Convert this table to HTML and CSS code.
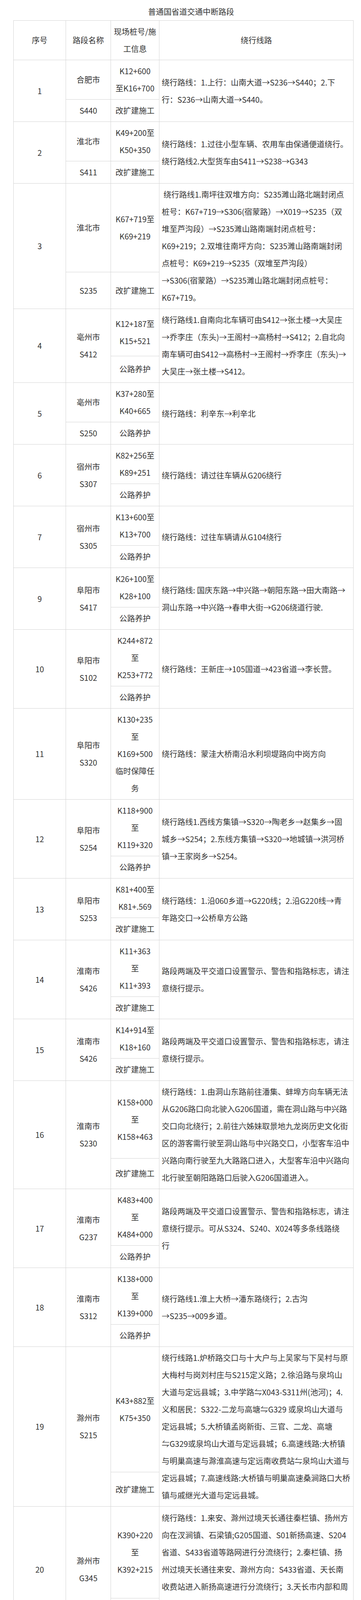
FILE: index.html
```html
<!DOCTYPE html>
<html lang="zh-CN">
<head>
<meta charset="utf-8">
<title>普通国省道交通中断路段</title>
<link rel="stylesheet" href="styles.css">
</head>
<body>
<div class="page">
<p class="title">普通国省道交通中断路段</p>
<table class="roads">
<colgroup><col class="c-num"><col class="c-name"><col class="c-pos"><col class="c-route"></colgroup>
<tbody>
<tr><td>序号</td><td>路段名称</td><td>现场桩号/施<br>工信息</td><td>绕行线路</td></tr>

<tr><td rowspan="2">1</td><td>合肥市</td><td>K12+600<br>至K16+700</td><td rowspan="2" class="route">绕行路线：1.上行：山南大道→S236→S440；2.下<br>行：S236→山南大道→S440。</td></tr>
<tr><td>S440</td><td>改扩建施工</td></tr>

<tr><td rowspan="2">2</td><td>淮北市</td><td>K49+200至<br>K50+350</td><td rowspan="2" class="route">绕行路线：1.过往小型车辆、农用车由保通便道绕行。<br>绕行路线2.大型货车由S411→S238→G343</td></tr>
<tr><td>S411</td><td>改扩建施工</td></tr>

<tr class="r3a"><td rowspan="2">3</td><td>淮北市</td><td>K67+719至<br>K69+219</td><td rowspan="2" class="route">&nbsp;绕行路线1.南坪往双堆方向：S235濉山路北端封闭点<br>桩号：K67+719→S306(宿蒙路）→X019→S235（双<br>堆至芦沟段）→S235濉山路南端封闭点桩号：<br>K69+219；2.双堆往南坪方向：S235濉山路南端封闭<br>点桩号：K69+219→S235（双堆至芦沟段）<br>→S306(宿蒙路）→S235濉山路北端封闭点桩号：<br>K67+719。</td></tr>
<tr class="r3b"><td>S235</td><td>改扩建施工</td></tr>

<tr><td rowspan="2">4</td><td rowspan="2">亳州市<br>S412</td><td>K12+187至<br>K15+521</td><td rowspan="2" class="route">绕行路线1.自南向北车辆可由S412→张土楼→大吴庄<br>→乔李庄（东头)→王阁村→高杨村→S412；2.自北向<br>南车辆可由S412→高杨村→王阁村→乔李庄（东头)→<br>大吴庄→张土楼→S412。</td></tr>
<tr><td>公路养护</td></tr>

<tr><td rowspan="2">5</td><td>亳州市</td><td>K37+280至<br>K40+665</td><td rowspan="2" class="route">绕行路线：利辛东→利辛北</td></tr>
<tr><td>S250</td><td>公路养护</td></tr>

<tr><td rowspan="2">6</td><td rowspan="2">宿州市<br>S307</td><td>K82+256至<br>K89+251</td><td rowspan="2" class="route">绕行路线：请过往车辆从G206绕行</td></tr>
<tr><td>公路养护</td></tr>

<tr><td rowspan="2">7</td><td rowspan="2">宿州市<br>S305</td><td>K13+600至<br>K13+700</td><td rowspan="2" class="route">绕行路线：过往车辆请从G104绕行</td></tr>
<tr><td>公路养护</td></tr>

<tr><td rowspan="2">9</td><td rowspan="2">阜阳市<br>S417</td><td>K26+100至<br>K28+100</td><td rowspan="2" class="route">绕行路线: 国庆东路→中兴路→朝阳东路→田大南路→<br>洞山东路→中兴路→春申大街→G206绕道行驶.</td></tr>
<tr><td>公路养护</td></tr>

<tr><td rowspan="2">10</td><td rowspan="2">阜阳市<br>S102</td><td>K244+872<br>至<br>K253+772</td><td rowspan="2" class="route">绕行路线：王新庄→105国道→423省道→李长营。</td></tr>
<tr><td>公路养护</td></tr>

<tr><td>11</td><td>阜阳市<br>S320</td><td>K130+235<br>至<br>K169+500<br>临时保障任<br>务</td><td class="route">绕行路线：蒙洼大桥南沿水利坝堤路向中岗方向</td></tr>

<tr><td rowspan="2">12</td><td rowspan="2">阜阳市<br>S254</td><td>K118+900<br>至<br>K119+320</td><td rowspan="2" class="route">绕行路线1.西线方集镇→S320→陶老乡→赵集乡→固<br>城乡→S254；2.东线方集镇→S320→地城镇→洪河桥<br>镇→王家岗乡→S254。</td></tr>
<tr><td>公路养护</td></tr>

<tr><td rowspan="2">13</td><td rowspan="2">阜阳市<br>S253</td><td>K81+400至<br>K81+.569</td><td rowspan="2" class="route">绕行路线：1.沿060乡道→G220线；2.沿G220线→青<br>年路交口→公桥阜方公路</td></tr>
<tr><td>改扩建施工</td></tr>

<tr><td rowspan="2">14</td><td rowspan="2">淮南市<br>S426</td><td>K11+363<br>至<br>K11+393</td><td rowspan="2" class="route">路段两端及平交道口设置警示、警告和指路标志，请注<br>意绕行提示。</td></tr>
<tr><td>改扩建施工</td></tr>

<tr><td rowspan="2">15</td><td rowspan="2">淮南市<br>S426</td><td>K14+914至<br>K18+160</td><td rowspan="2" class="route">路段两端及平交道口设置警示、警告和指路标志，请注<br>意绕行提示。</td></tr>
<tr><td>改扩建施工</td></tr>

<tr><td rowspan="2">16</td><td rowspan="2">淮南市<br>S230</td><td>K158+000<br>至<br>K158+463</td><td rowspan="2" class="route">绕行路线：1.由洞山东路前往潘集、蚌埠方向车辆无法<br>从G206路口向北驶入G206国道，需在洞山路与中兴路<br>交口向北绕行；2.前往六姊妹取景地九龙岗历史文化街<br>区的游客需行驶至洞山路与中兴路交口，小型客车沿中<br>兴路向南行驶至九大路路口进入，大型客车沿中兴路向<br>北行驶至朝阳路路口后驶入G206国道进入。</td></tr>
<tr><td>改扩建施工</td></tr>

<tr><td rowspan="2">17</td><td rowspan="2">淮南市<br>G237</td><td>K483+400<br>至<br>K484+000</td><td rowspan="2" class="route">路段两端及平交道口设置警示、警告和指路标志，请注<br>意绕行提示。可从S324、S240、X024等多条线路绕<br>行</td></tr>
<tr><td>公路养护</td></tr>

<tr><td rowspan="2">18</td><td rowspan="2">淮南市<br>S312</td><td>K138+000<br>至<br>K139+000</td><td rowspan="2" class="route">绕行路线1.淮上大桥→潘东路绕行；2.古沟<br>→S235→009乡道。</td></tr>
<tr><td>公路养护</td></tr>

<tr class="r19a"><td rowspan="2">19</td><td rowspan="2">滁州市<br>S215</td><td>K43+882至<br>K75+350</td><td rowspan="2" class="route">绕行线路1.炉桥路交口与十大户与上吴家与下吴村与原<br>大梅村与岗刘村庄与S215定义路；2.徐沿路与泉坞山<br>大道与定远县城；3.中学路⇋X043-S311州(池河)；4.<br>义和居民：S322-二龙与高塘⇋G329 或泉坞山大道与<br>定远县城；5.大桥镇孟岗新街、三官、二龙、高塘<br>⇋G329或泉坞山大道与定远县城；6.高速线路:大桥镇<br>与明巢高速与滁淮高速与定远南收费站⇋泉坞山大道与<br>定远县城；7.高速线路:大桥镇与明巢高速桑涧路口大桥<br>镇与戚继光大道与定远县城。</td></tr>
<tr class="r19b"><td>改扩建施工</td></tr>

<tr class="r20a"><td rowspan="2">20</td><td rowspan="2">滁州市<br>G345</td><td>K390+220<br>至<br>K392+215</td><td rowspan="2" class="route">绕行路线：1.来安、滁州过境天长通往秦栏镇、扬州方<br>向在汊涧镇、石梁镇;G205国道、S01新扬高速、S204<br>省道、S433省道等路网进行分流绕行；2.秦栏镇、扬<br>州过境天长通往来安、滁州方向：S433省道、天长南<br>收费站进入新扬高速进行分流绕行；3.天长市内部和周<br>边：经七路、经九路、纬三路、天宁大道、新时代大道<br>与G345 国道交口分流绕行。</td></tr>
<tr class="r20b"><td>保障任务</td></tr>

<tr><td rowspan="2">21</td><td rowspan="2">滁州市<br>S312</td><td>K88+200至<br>K91+000</td><td rowspan="2" class="route">绕行路线：S312 K88+200改至武店镇外环路绕行</td></tr>
<tr><td>改扩建施工</td></tr>

<tr><td rowspan="2">22</td><td rowspan="2">滁州市<br>S433</td><td>K11+100<br>至<br>K11+400</td><td rowspan="2" class="route">绕行路线：1.小型车辆及公安、消防、公交、校车等特<br>殊车辆：S433→人民东路→状元大道→振兴路<br>→S433；2.大型车辆绕行路线：S433→光明路→光明<br>西路→S204→S433</td></tr>
<tr><td>公路养护</td></tr>

<tr><td rowspan="2">23</td><td rowspan="2">滁州市<br>S432</td><td>K0+000至<br>K0+550</td><td rowspan="2" class="route">绕行路线：1.天长至新街车辆从Y078绕行；2.天长至何<br>庄车辆从石梁街道绕行；3.汊涧至新街车辆从X129、<br>X139绕行。4.汊涧至何庄车辆从X129、X134绕行。</td></tr>
<tr><td>公路养护</td></tr>

<tr><td rowspan="2">24</td><td rowspan="2">六安市<br>S244</td><td>K132.987 -<br>K133.500</td><td rowspan="2" class="route">绕行路线：杨泗岭至黑石渡车辆从诸佛庵大桥→诸佛庵<br>街道→S244至黑石渡</td></tr>
<tr><td>改扩建施工</td></tr>

<tr><td rowspan="2">25</td><td rowspan="2">六安市<br>S240</td><td>K40.240 -<br>K40.458</td><td rowspan="2" class="route">绕行路线：1.三十铺至干渠南路往东→蓝溪路→防汛堤<br>坝路往西→S240茶毛路→东桥；2.三十铺至干渠南路<br>往西→胜利路→万佛湖路往东→S240茶毛路→东桥。</td></tr>
<tr><td>公路养护</td></tr>

<tr><td rowspan="2">26</td><td rowspan="2">马鞍山市<br>S205</td><td>K0+012至<br>K52+225</td><td rowspan="2" class="route">路段两端及平交道口设置警示、警告和指路标志，请注<br>意绕行提示。</td></tr>
<tr><td>公路养护</td></tr>

<tr class="r27a"><td rowspan="2">27</td><td rowspan="2">芜湖市<br>G329</td><td>K688.010 -<br>K688.730</td><td rowspan="2" class="route">绕行路线：1.过境交通以及大型货运车辆可选择高速绕<br>行方案。绕行路径：G329→迎江大道→G5011芜合高<br>速→大江南路→G329；2.国省道绕行方案：大江南路<br>→塔运路→G347通江大道→二坝枢纽→沈巷；3.人行<br>保通方案：含山侧新建保通钢人行梯与主桥人行道连<br>接，行人可通过新建保通钢人行梯、左幅主桥人行道及<br>芜湖侧已建东北侧人行梯道过河。</td></tr>
<tr class="r27b"><td>公路养护</td></tr>

<tr><td rowspan="2">28</td><td rowspan="2">安庆市<br>S471</td><td>K41+800至<br>K42+300</td><td rowspan="2" class="route">绕行路线：经S246（通港路）、G347国道、望江大<br>道、西环路、蓝天路、华阳大道绕行。</td></tr>
<tr><td>改扩建施工</td></tr>

<tr><td rowspan="2">29</td><td rowspan="2">安庆市<br>G318</td><td>K567+651<br>至<br>K568+123</td><td rowspan="2" class="route">绕行路线：车辆需绕行至安庆至潜山方向左侧新建导改<br>道路通行</td></tr>
<tr><td>改扩建施工</td></tr>

<tr><td rowspan="2">30</td><td rowspan="2">黄山市<br>S605</td><td>K62+500<br>至<br>K63+829</td><td rowspan="2" class="route">绕行路线：1.往返龙门乡-太平湖景区的车辆请沿S103<br>线→龙门乡政府→龙门乡龙源村→城区→民主村→太平<br>湖方向绕行。2.往返太平湖景区-龙门乡的车辆请沿<br>G330线→民主村→城区→龙门乡龙源村→龙门乡方向<br>绕行。</td></tr>
<tr><td>公路养护</td></tr>

<tr><td rowspan="2">31</td><td rowspan="2">黄山市<br>S103</td><td>K267+493<br>至<br>K267+768</td><td rowspan="2" class="route">绕行路线：往返城区-龙门乡的车辆请沿S103线小龙坑<br>交岔口→龙门乡政府→龙门村</td></tr>
<tr><td>公路养护</td></tr>

<tr><td rowspan="2">32</td><td rowspan="2">黄山市<br>S226</td><td>K26+761至<br>K50+655</td><td rowspan="2" class="route">绕行路线：1.祁门县城←→塔坊镇←→平里镇←→溶口<br>乡←→芦溪乡←→芦溪乡查湾村←→江西浮梁县陈村；<br>2.祁门县城←→塔坊镇←→祁红乡←→榨里村←→新胡<br>村←→芦溪乡查湾村←→江西浮梁县陈村。</td></tr>
<tr><td>公路养护</td></tr>

<tr><td rowspan="2">33</td><td rowspan="2">黄山市<br>S226</td><td>K50+655至<br>K54+655</td><td class="route">绕行路线：1:祁门县城←→塔坊镇←→平里镇←→溶口<br>乡←→芦溪乡←→芦溪乡查湾村←→江西浮梁县陈<br>村；</td></tr>
<tr><td>公路养护</td><td class="route">绕行路线2：祁门县城←→塔坊镇←→祁红乡←→榨里<br>村←→新胡村←→芦溪乡查湾村←→江西浮梁县陈村。</td></tr>
</tbody>
</table>
</div>
</body>
</html>
```

FILE: styles.css
```css
html, body {
  margin: 0;
  background: #ffffff;
}

body {
  color: #333333;
  font-family: "Noto Sans CJK SC", "Noto Sans", sans-serif;
  font-size: 20px;
  line-height: 44px;
}

.page {
  padding: 8px 20px 0 34px;
}

.title {
  margin: 0;
  text-align: center;
  text-indent: 40px;
  font-size: 20px;
  font-weight: normal;
  line-height: 44px;
}

.roads {
  border-collapse: collapse;
  table-layout: fixed;
  width: 870px;
}

.c-num { width: 134px; }
.c-name { width: 115px; }
.c-pos { width: 124px; }
.c-route { width: 497px; }

.roads td {
  border: 1px solid #d4d4d4;
  padding: 6px;
  text-align: center;
  vertical-align: middle;
  white-space: nowrap;
}

.roads td.route {
  text-align: left;
}

.r3a { height: 227px; }
.r3b { height: 94px; }
.r19a { height: 321px; }
.r19b { height: 88px; }
.r20a { height: 235px; }
.r20b { height: 87px; }
.r27a { height: 234px; }
.r27b { height: 87px; }
```
